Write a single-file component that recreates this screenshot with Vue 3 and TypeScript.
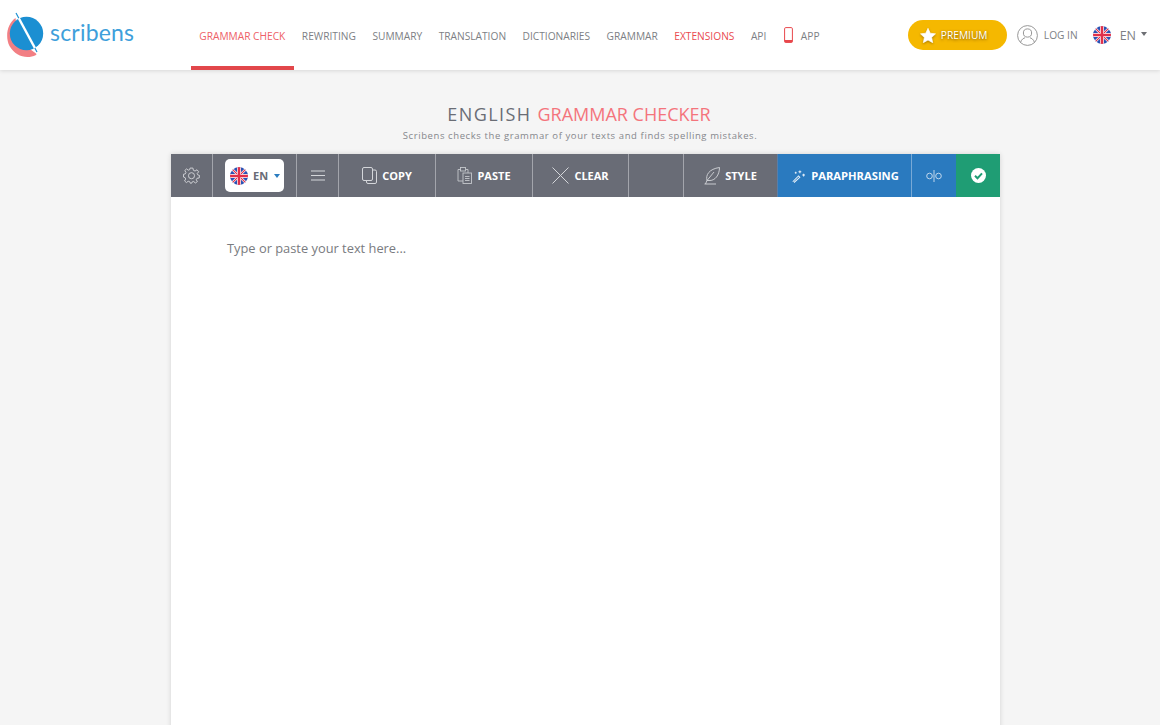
<template>
  <div class="page">
    <header class="topbar">
      <a class="logo">
        <svg width="44" height="48" viewBox="0 0 44 48">
          <path d="M10.500 7 C2 13 0 26 4.500 35 C10.500 45.500 22 48.500 31 44 C31.500 43.500 31.500 43 31 42.500 L14 30Z" fill="#f27f84" />
          <circle cx="21.500" cy="22.500" r="16.700" fill="#1b8fd2" />
          <path d="M11 2 L32 41" stroke="#1b8fd2" stroke-width="1.200" />
          <path d="M13.800 7.200 L29.900 37" stroke="#fff" stroke-width="2.400" />
        </svg>
        <span class="logo-text">scribens</span>
      </a>

      <nav class="nav">
        <a
          v-for="item in navItems"
          :key="item.label"
          :class="['nav-item', { active: item.active, red: item.red }]"
        >
          <svg v-if="item.phone" class="phone" width="9" height="16" viewBox="0 0 9 16">
            <rect x="0.600" y="0.600" width="7.800" height="14.800" rx="1.200" fill="none" stroke="#e8474c" stroke-width="1" />
            <rect x="0.600" y="13" width="7.800" height="2.400" fill="#e8474c" />
          </svg>
          {{ item.label }}
        </a>
      </nav>

      <div class="top-right">
        <button class="premium">
          <svg width="16" height="15" viewBox="0 0 24 23">
            <path d="M12 0.500 L15.500 8 L23.500 9 L17.600 14.500 L19.200 22.500 L12 18.500 L4.800 22.500 L6.400 14.500 L0.500 9 L8.500 8Z" fill="#fff" stroke="#fff" stroke-linejoin="round" />
          </svg>
          PREMIUM
        </button>
        <a class="login">
          <svg width="21" height="21" viewBox="0 0 21 21" fill="none" stroke="#8b8b8b" stroke-width="0.900">
            <circle cx="10.500" cy="10.500" r="9.900" />
            <circle cx="10.500" cy="8" r="4.100" />
            <path d="M3.500 17.500 C4.500 14 7 13 8 12.800 M17.500 17.500 C16.500 14 14 13 13 12.800" />
          </svg>
          LOG IN
        </a>
        <a class="lang">
          <svg class="flag" width="18" height="18" viewBox="0 0 18 18">
            <defs>
              <clipPath id="flag-top"><circle cx="9" cy="9" r="9" /></clipPath>
            </defs>
            <g clip-path="url(#flag-top)">
              <rect width="18" height="18" fill="#2a52b4" />
              <path d="M0 0 L18 18 M18 0 L0 18" stroke="#fff" stroke-width="2.400" />
              <path d="M0 0 L18 18 M18 0 L0 18" stroke="#e0304a" stroke-width="1.200" />
              <path d="M9 0 V18 M0 9 H18" stroke="#fff" stroke-width="4" />
              <path d="M9 0 V18 M0 9 H18" stroke="#e0304a" stroke-width="2.600" />
            </g>
          </svg>
          <span>EN</span>
          <i class="caret"></i>
        </a>
      </div>
    </header>

    <main class="main">
      <h1 class="title">ENGLISH <span>GRAMMAR CHECKER</span></h1>
      <p class="subtitle">Scribens checks the grammar of your texts and finds spelling mistakes.</p>

      <section class="checker">
        <div class="toolbar">
          <button class="tool tool-gear" title="Settings">
            <svg width="17" height="17" viewBox="0 0 24 24" fill="none" stroke="#d4d6da" stroke-width="1.300" stroke-linejoin="round">
              <path d="M10 1.500 H14 L14.700 4.700 L17 5.700 L19.800 3.900 L22.100 6.800 L20 9.300 L20.700 11 L23.300 12 L22.800 15.600 L19.800 15.900 L18.700 18 L20.300 20.600 L17.400 22.600 L15.200 20.500 L13 21 L12 23 H10.500 L9.500 20.800 L7.300 20.100 L4.900 22 L2.200 19.700 L3.800 17 L3 15 L0.700 14.200 V10.300 L3.300 9.700 L4.200 7.500 L2.500 5 L5 2.700 L7.500 4.500 L9.500 3.700Z" />
              <circle cx="12" cy="12.300" r="4.300" />
            </svg>
          </button>
          <div class="tool tool-lang">
            <button class="lang-select">
              <svg width="18" height="18" viewBox="0 0 18 18">
                <defs>
                  <clipPath id="flag-bar"><circle cx="9" cy="9" r="9" /></clipPath>
                </defs>
                <g clip-path="url(#flag-bar)">
                  <rect width="18" height="18" fill="#2a52b4" />
                  <path d="M0 0 L18 18 M18 0 L0 18" stroke="#fff" stroke-width="2.400" />
                  <path d="M0 0 L18 18 M18 0 L0 18" stroke="#e0304a" stroke-width="1.200" />
                  <path d="M9 0 V18 M0 9 H18" stroke="#fff" stroke-width="4" />
                  <path d="M9 0 V18 M0 9 H18" stroke="#e0304a" stroke-width="2.600" />
                </g>
              </svg>
              <span>EN</span>
              <i class="caret blue"></i>
            </button>
          </div>
          <button class="tool tool-menu" title="Menu">
            <svg width="14" height="11" viewBox="0 0 14 11" stroke="#d4d6da" stroke-width="1.200">
              <path d="M0 1 H14 M0 5.500 H14 M0 10 H14" />
            </svg>
          </button>
          <button class="tool tool-copy">
            <svg width="15" height="17" viewBox="0 0 15 17" fill="none" stroke="#d4d6da" stroke-width="1">
              <rect x="0.500" y="0.500" width="10" height="13" rx="1.500" />
              <path d="M10.500 3 H13 Q14.500 3 14.500 4.500 V15 Q14.500 16.500 13 16.500 H6 Q4.500 16.500 4.500 15 V13.500" />
            </svg>
            COPY
          </button>
          <button class="tool tool-paste">
            <svg width="15" height="17" viewBox="0 0 15 17" fill="none" stroke="#c4c7cc" stroke-width="0.900">
              <path d="M4 2.500 H1 V14 H6" />
              <path d="M9 2.500 H11 V6" />
              <rect x="3.500" y="0.500" width="5" height="3.500" />
              <rect x="6" y="6" width="8.500" height="10.500" />
              <path d="M8 9.500 H12.500 M8 11.500 H12.500 M8 13.500 H12.500" />
            </svg>
            PASTE
          </button>
          <button class="tool tool-clear">
            <svg width="17" height="17" viewBox="0 0 17 17" stroke="#d4d6da" stroke-width="1">
              <path d="M0.500 0.500 L16.500 16.500 M16.500 0.500 L0.500 16.500" />
            </svg>
            CLEAR
          </button>
          <div class="tool tool-blank"></div>
          <button class="tool tool-style">
            <svg width="16" height="18" viewBox="0 0 16 18" fill="none" stroke="#d4d6da" stroke-width="0.900">
              <path d="M3 13.500 C1.500 8 5 2 15.500 0.500 C15.500 8 11 14 5 13.500 Z" />
              <path d="M3 13.500 L10 5" />
              <path d="M0.500 17 H12" />
              <path d="M3 13.500 L1.500 17" />
            </svg>
            STYLE
          </button>
          <button class="tool tool-para">
            <svg width="13" height="14" viewBox="0 0 14 14" fill="none" stroke="#e6eff8" stroke-width="1.100">
              <path d="M0.800 13.200 L7 7 L8.400 8.400 L2.200 14" />
              <path d="M8.500 1 V4 M7 2.500 H10 M12.500 4.500 V7.500 M11 6 H14 M4 2.500 V4.500 M3 3.500 H5" />
            </svg>
            PARAPHRASING
          </button>
          <button class="tool tool-align" title="Compare">
            <svg width="16" height="12" viewBox="0 0 16 12" fill="none" stroke="#cfe0f1" stroke-width="0.900">
              <circle cx="3.500" cy="6" r="2.800" />
              <circle cx="12.500" cy="6" r="2.800" />
              <path d="M8 0 V12" />
            </svg>
          </button>
          <button class="tool tool-check" title="Check">
            <svg width="15" height="15" viewBox="0 0 15 15">
              <circle cx="7.500" cy="7.500" r="7.500" fill="#fff" />
              <path d="M4 7.700 L6.500 10.200 L11 5.400" fill="none" stroke="#1f9d74" stroke-width="2" />
            </svg>
          </button>
        </div>
        <div class="editor">
          <p class="placeholder">Type or paste your text here...</p>
        </div>
      </section>
    </main>
  </div>
</template>

<script setup lang="ts">
interface NavItem {
  label: string;
  active?: boolean;
  red?: boolean;
  phone?: boolean;
}

const navItems: NavItem[] = [
  { label: 'GRAMMAR CHECK', active: true },
  { label: 'REWRITING' },
  { label: 'SUMMARY' },
  { label: 'TRANSLATION' },
  { label: 'DICTIONARIES' },
  { label: 'GRAMMAR' },
  { label: 'EXTENSIONS', red: true },
  { label: 'API' },
  { label: 'APP', phone: true }
];
</script>

<style>
html,
body {
  margin: 0;
  background-color: #f5f5f5;
}
</style>

<style scoped>
.page {
  height: 725px;
  overflow: hidden;
  font-family: 'Open Sans', 'Liberation Sans', sans-serif;
  background-color: #f5f5f5;
}

.topbar {
  display: flex;
  align-items: stretch;
  height: 70px;
  background-color: #fff;
  box-shadow: 0 1px 4px rgba(0, 0, 0, 0.12);
}

.logo {
  display: flex;
  align-items: center;
  width: 191px;
  padding-left: 5px;
  box-sizing: border-box;
}

.logo-text {
  margin-left: 1px;
  margin-top: -6px;
  font-family: Lato, sans-serif;
  font-weight: 400;
  font-size: 23px;
  letter-spacing: 0.2px;
  color: #3e9fdb;
}

.nav {
  display: flex;
  align-items: stretch;
}

.nav-item {
  display: flex;
  align-items: center;
  gap: 8px;
  padding: 5px 8.250px 0;
  font-size: 10.200px;
  color: #7d7f85;
  border-bottom: 4px solid transparent;
  box-sizing: border-box;
  height: 70px;
}

.nav-item.active {
  color: #ee6167;
  border-bottom-color: #e2474b;
}

.nav-item.red {
  color: #ea4b50;
}

.phone {
  margin-top: -1px;
  margin-left: 1px;
}

.top-right {
  display: flex;
  align-items: center;
  margin-left: auto;
  padding-right: 13px;
}

.premium {
  display: flex;
  align-items: center;
  gap: 5px;
  width: 99px;
  height: 30px;
  padding: 0 0 0 12px;
  border: none;
  border-radius: 15px;
  background-color: #f5b800;
  color: #fff;
  font-family: inherit;
  font-size: 10.200px;
  text-shadow: 0 1px 3px rgba(110, 70, 0, 0.9);
}

.premium svg {
  filter: drop-shadow(0 1px 1px rgba(120, 80, 0, 0.6));
}

.login {
  display: flex;
  align-items: center;
  gap: 6px;
  margin-left: 10px;
  font-size: 10.200px;
  color: #7d7f85;
}

.lang {
  display: flex;
  align-items: center;
  margin-left: 15px;
  font-size: 12.500px;
  color: #7d7f85;
}

.lang span {
  margin-left: 9px;
}

.caret {
  display: block;
  margin-left: 5px;
  margin-top: -2px;
  border-left: 3.500px solid transparent;
  border-right: 3.500px solid transparent;
  border-top: 4px solid #6d6f74;
}

.caret.blue {
  margin-left: 6px;
  margin-top: 1px;
  border-top-color: #2a7cc0;
}

.main {
  display: flex;
  flex-direction: column;
  align-items: center;
}

.title {
  margin: 31px 2px 0 0;
  font-size: 18px;
  line-height: 26px;
  font-weight: 400;
  letter-spacing: 1.400px;
  color: #6a6d75;
}

.title span {
  letter-spacing: 0;
  color: #f4747c;
}

.subtitle {
  margin: 2px 0 0;
  font-size: 9.500px;
  line-height: 14px;
  letter-spacing: 0.6px;
  color: #85878c;
}

.checker {
  width: 829px;
  height: 600px;
  margin-top: 11px;
  margin-left: 11px;
  box-shadow: 0 0 5px rgba(0, 0, 0, 0.14);
}

.toolbar {
  display: flex;
  height: 43px;
  background-color: #696c76;
}

.tool {
  display: flex;
  align-items: center;
  justify-content: center;
  gap: 5px;
  flex: none;
  height: 43px;
  padding: 0;
  border: none;
  border-right: 1px solid #a3a5ac;
  box-sizing: border-box;
  background-color: transparent;
  color: #fff;
  font-family: inherit;
  font-size: 11px;
  font-weight: 700;
}

.tool-gear { width: 42px; }
.tool-lang { width: 84px; }
.tool-menu { width: 42px; }
.tool-copy { width: 97px; }
.tool-paste { width: 97px; }
.tool-clear { width: 96px; }
.tool-blank { width: 55px; }
.tool-style { width: 94px; border-right-color: #5a7ea8; }

.tool-para {
  width: 134px;
  gap: 6px;
  padding-left: 2px;
  font-size: 11.200px;
  background-color: #2a7abf;
  border-right-color: #78a9d6;
}

.tool-align {
  width: 44px;
  background-color: #2a7abf;
  border-right: none;
}

.tool-check {
  width: 44px;
  background-color: #1f9d74;
  border-right: none;
}

.lang-select {
  display: flex;
  align-items: center;
  width: 59px;
  height: 33px;
  padding: 0 0 0 5px;
  border: none;
  border-radius: 5px;
  box-sizing: border-box;
  background-color: #fff;
  color: #696c76;
  font-family: inherit;
  font-size: 11px;
  font-weight: 700;
}

.lang-select span {
  margin-left: 5px;
}

.editor {
  height: 557px;
  background-color: #fff;
}

.placeholder {
  margin: 0;
  padding: 41px 0 0 56px;
  font-size: 12.850px;
  line-height: 20px;
  color: #797b80;
}
</style>
